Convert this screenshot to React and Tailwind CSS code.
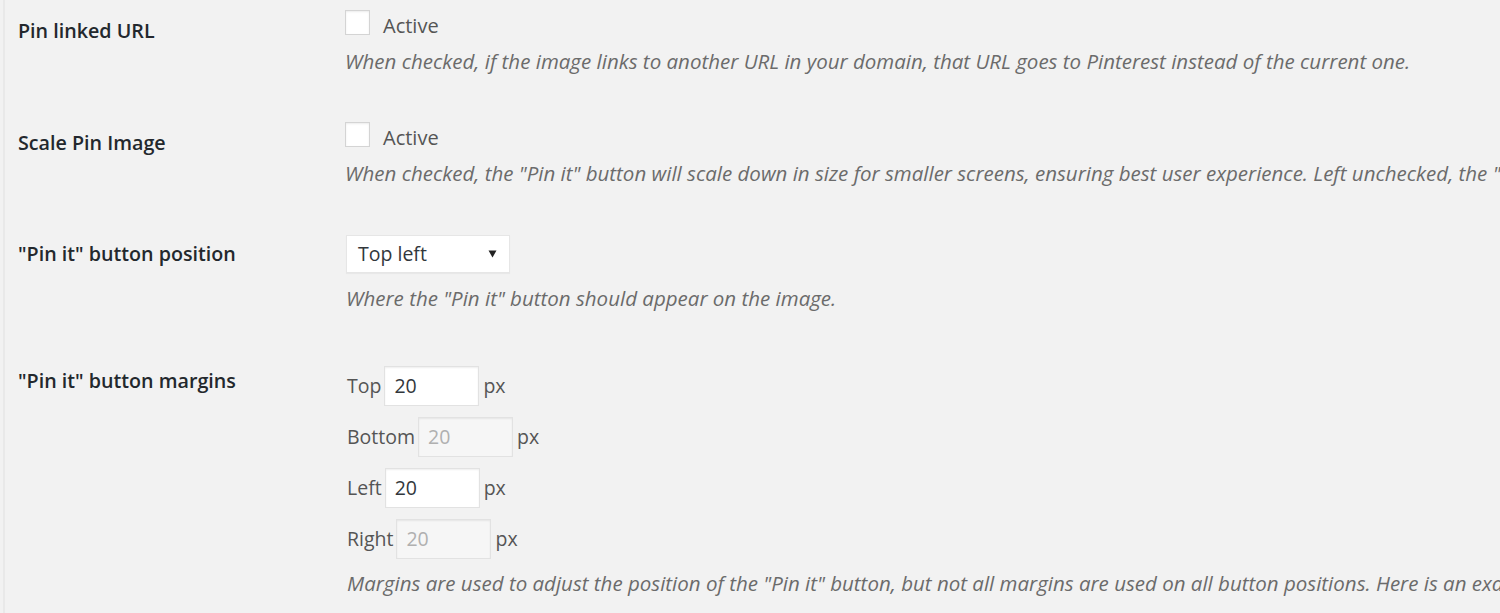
import React from "react";

const font = { fontFamily: '"Open Sans", "Noto Sans", sans-serif' };

function Checkbox() {
  return (
    <span className="inline-block w-[25px] h-[25px] bg-white border border-[#d4d4d4] shadow-[inset_0_1px_2px_rgba(0,0,0,0.08)]" />
  );
}

function Label({ children, className = "" }) {
  return (
    <div className={"w-[329px] shrink-0 pl-[18px] text-[19.7px] leading-[26px] font-semibold text-[#23282d] " + className}>
      {children}
    </div>
  );
}

function Desc({ children, className = "" }) {
  return (
    <div className={"text-[20.5px] leading-[26px] italic text-[#6b6b6b] whitespace-nowrap " + className}>
      {children}
    </div>
  );
}

function MarginInput({ label, value, disabled }) {
  return (
    <div className="flex items-center h-[40px] text-[19.5px] text-[#555]">
      <span>{label}</span>
      <span
        className={
          "ml-[3px] w-[95px] h-[40px] flex items-center pl-[9px] border border-[#e2e2e2] shadow-[inset_0_1px_2px_rgba(0,0,0,0.07)] " +
          (disabled ? "bg-[#f6f6f6] text-[#b0b0b0]" : "bg-white text-[#32373c]")
        }
      >
        {value}
      </span>
      <span className="ml-[4px]">px</span>
    </div>
  );
}

export default function App() {
  return (
    <div className="w-[1500px] h-[613px] overflow-hidden bg-[#f2f2f2] flex" style={font}>
      <div className="w-[3px] shrink-0" />
      <div className="w-[2px] shrink-0 bg-[#e9e9e9]" />
      <div className="flex-1 flex flex-col -ml-[5px] min-w-0">
        {/* Row 1 */}
        <div className="flex h-[112px]">
          <Label className="pt-[18px]">Pin linked URL</Label>
          <div className="pt-[9px] pl-[16px] min-w-0">
            <div className="flex items-center h-[26px]">
              <Checkbox />
              <span className="ml-[13px] pt-[7px] text-[20px] text-[#555]">Active</span>
            </div>
            <Desc className="mt-[13px]">
              When checked, if the image links to another URL in your domain, that URL goes to Pinterest instead of the current one.
            </Desc>
          </div>
        </div>
        {/* Row 2 */}
        <div className="flex h-[112px]">
          <Label className="pt-[18px]">Scale Pin Image</Label>
          <div className="pt-[9px] pl-[16px] min-w-0">
            <div className="flex items-center h-[26px]">
              <Checkbox />
              <span className="ml-[13px] pt-[7px] text-[20px] text-[#555]">Active</span>
            </div>
            <Desc className="mt-[13px]">
              When checked, the "Pin it" button will scale down in size for smaller screens, ensuring best user experience. Left unchecked, the "Pin it" button will always be the same size.
            </Desc>
          </div>
        </div>
        {/* Row 3 */}
        <div className="flex h-[126px]">
          <Label className="pt-[17px]">"Pin it" button position</Label>
          <div className="pt-[11px] pl-[17px] min-w-0">
            <div className="w-[164px] h-[38px] bg-white border border-[#e6e6e6] shadow-[0_1px_1px_rgba(0,0,0,0.04)] flex items-center justify-between pl-[11px] pr-[12px] text-[19.5px] text-[#32373c]">
              <span>Top left</span>
              <svg width="9" height="8" viewBox="0 0 9 8">
                <path d="M0.5 0.5 L8.5 0.5 L4.5 7.5 Z" fill="#222" />
              </svg>
            </div>
            <Desc className="mt-[12px]">Where the "Pin it" button should appear on the image.</Desc>
          </div>
        </div>
        {/* Row 4 */}
        <div className="flex flex-1">
          <Label className="pt-[18px]">"Pin it" button margins</Label>
          <div className="pt-[16px] pl-[18px] flex flex-col gap-[11px] min-w-0">
            <MarginInput label="Top" value="20" />
            <MarginInput label="Bottom" value="20" disabled />
            <MarginInput label="Left" value="20" />
            <MarginInput label="Right" value="20" disabled />
            <Desc className="mt-0">
              Margins are used to adjust the position of the "Pin it" button, but not all margins are used on all button positions. Here is an example: if you use "Top left" position, the Right and Bottom margins are not used.
            </Desc>
          </div>
        </div>
      </div>
    </div>
  );
}
